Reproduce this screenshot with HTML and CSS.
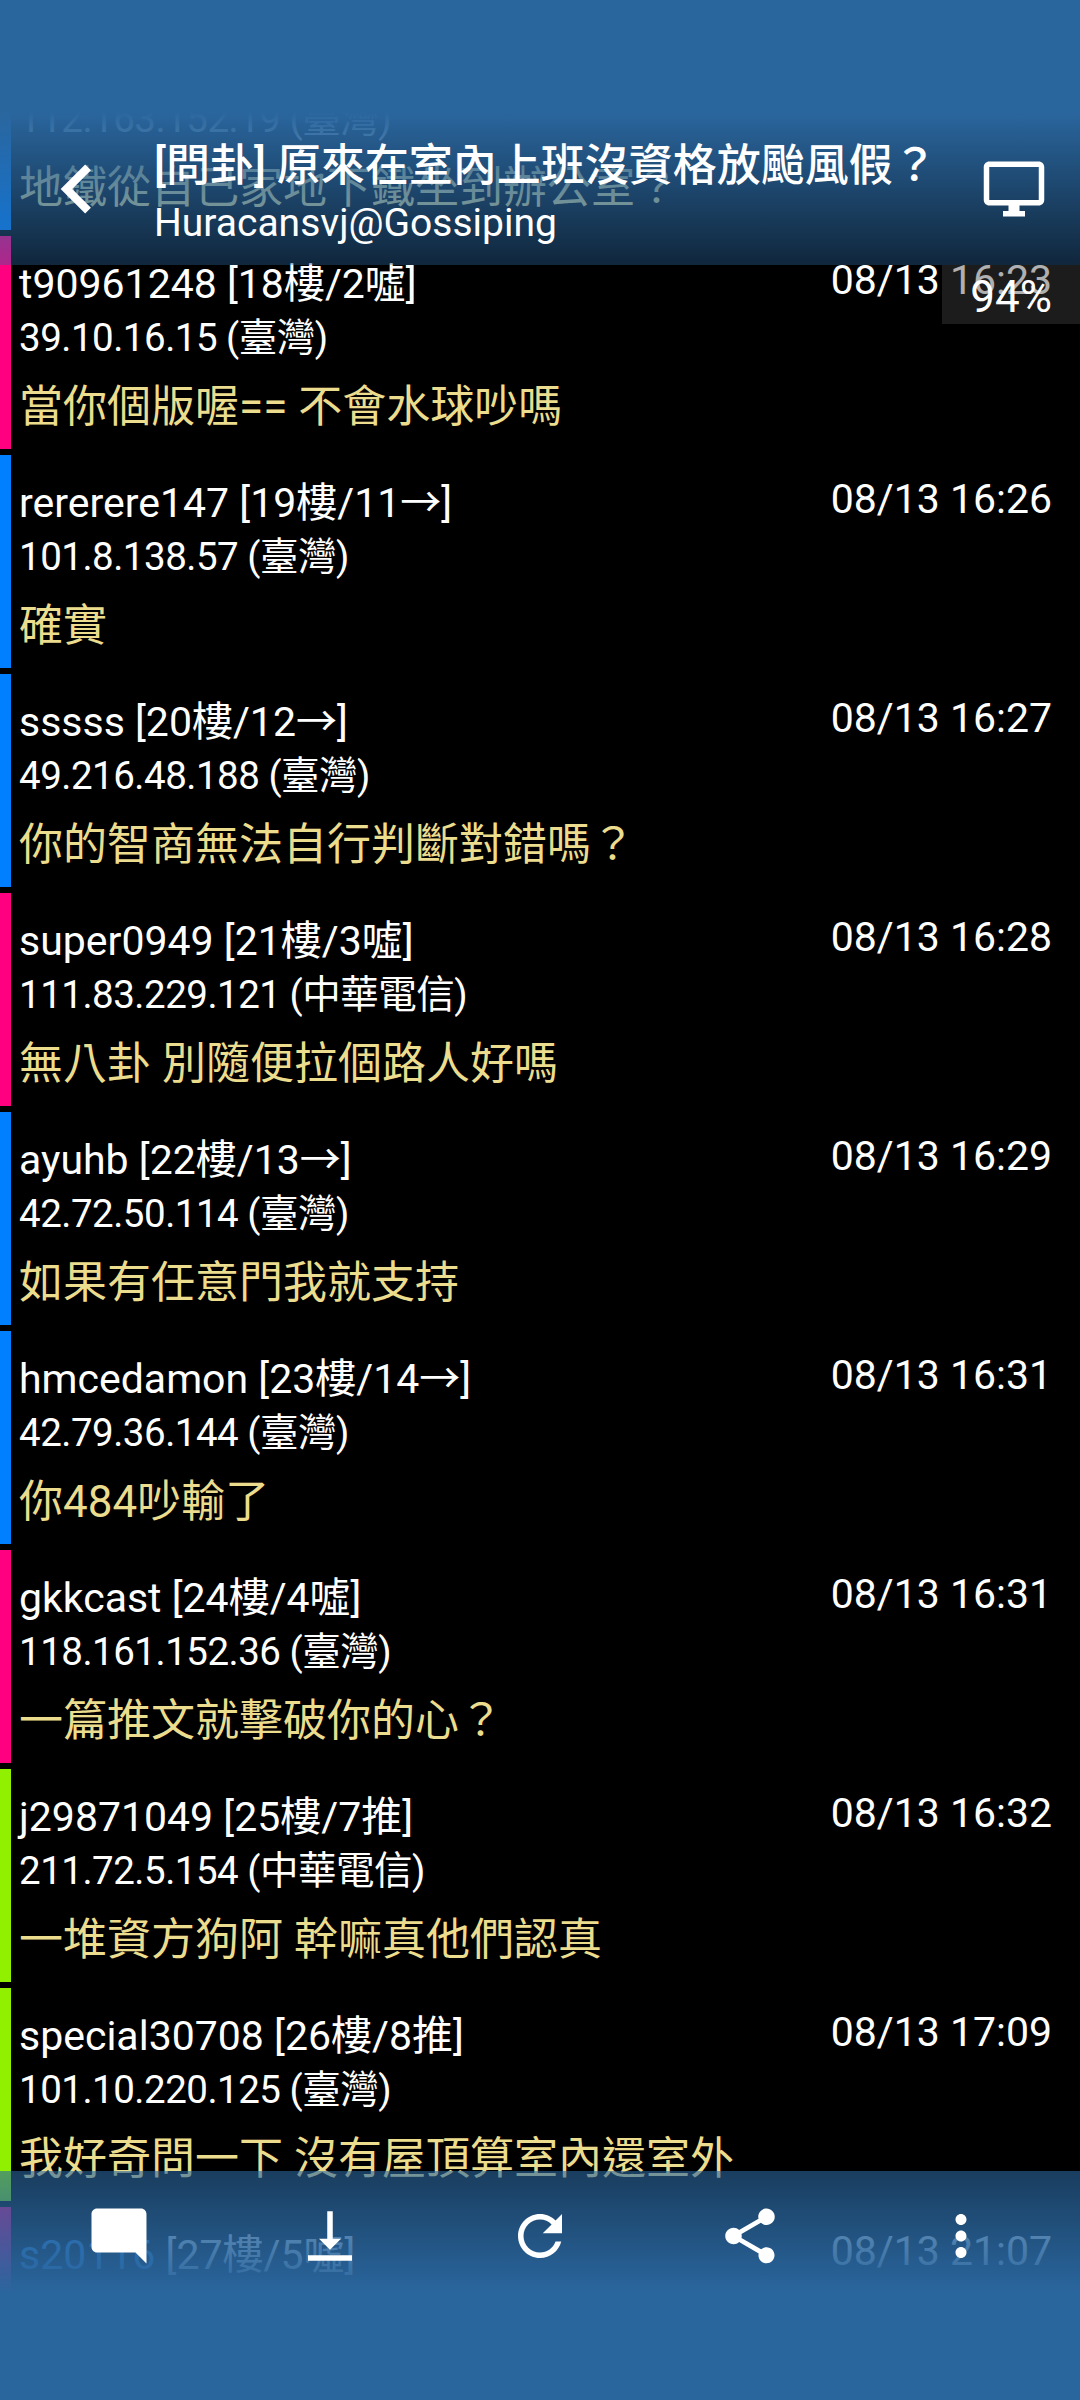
FILE: index.html
```
<!DOCTYPE html>
<html lang="zh-Hant">
<head>
<meta charset="utf-8">
<meta name="viewport" content="width=device-width, initial-scale=1.0">
<title>[問卦] 原來在室內上班沒資格放颱風假？</title>
<link rel="stylesheet" href="styles.css">
</head>
<body>
<div class="screen">
  <div class="list">
    <div class="row arrow">
      <div class="info">
        <div class="name">&nbsp;</div>
        <div class="ip">112.163.152.19 (臺灣)</div>
        <div class="text">地鐵從自己家地下鐵坐到辦公室？</div>
      </div>
    </div>
    <div class="row boo">
      <div class="info">
        <div class="name">t90961248 [18樓/2噓]</div>
        <div class="ip">39.10.16.15 (臺灣)</div>
        <div class="text">當你個版喔== 不會水球吵嗎</div>
      </div>
      <div class="date">08/13 16:23</div>
    </div>
    <div class="row arrow">
      <div class="info">
        <div class="name">rererere147 [19樓/11→]</div>
        <div class="ip">101.8.138.57 (臺灣)</div>
        <div class="text">確實</div>
      </div>
      <div class="date">08/13 16:26</div>
    </div>
    <div class="row arrow">
      <div class="info">
        <div class="name">sssss [20樓/12→]</div>
        <div class="ip">49.216.48.188 (臺灣)</div>
        <div class="text">你的智商無法自行判斷對錯嗎？</div>
      </div>
      <div class="date">08/13 16:27</div>
    </div>
    <div class="row boo">
      <div class="info">
        <div class="name">super0949 [21樓/3噓]</div>
        <div class="ip">111.83.229.121 (中華電信)</div>
        <div class="text">無八卦 別隨便拉個路人好嗎</div>
      </div>
      <div class="date">08/13 16:28</div>
    </div>
    <div class="row arrow">
      <div class="info">
        <div class="name">ayuhb [22樓/13→]</div>
        <div class="ip">42.72.50.114 (臺灣)</div>
        <div class="text">如果有任意門我就支持</div>
      </div>
      <div class="date">08/13 16:29</div>
    </div>
    <div class="row arrow">
      <div class="info">
        <div class="name">hmcedamon [23樓/14→]</div>
        <div class="ip">42.79.36.144 (臺灣)</div>
        <div class="text">你484吵輸了</div>
      </div>
      <div class="date">08/13 16:31</div>
    </div>
    <div class="row boo">
      <div class="info">
        <div class="name">gkkcast [24樓/4噓]</div>
        <div class="ip">118.161.152.36 (臺灣)</div>
        <div class="text">一篇推文就擊破你的心？</div>
      </div>
      <div class="date">08/13 16:31</div>
    </div>
    <div class="row push">
      <div class="info">
        <div class="name">j29871049 [25樓/7推]</div>
        <div class="ip">211.72.5.154 (中華電信)</div>
        <div class="text">一堆資方狗阿 幹嘛真他們認真</div>
      </div>
      <div class="date">08/13 16:32</div>
    </div>
    <div class="row push">
      <div class="info">
        <div class="name">special30708 [26樓/8推]</div>
        <div class="ip">101.10.220.125 (臺灣)</div>
        <div class="text">我好奇問一下 沒有屋頂算室內還室外</div>
      </div>
      <div class="date">08/13 17:09</div>
    </div>
    <div class="row boo">
      <div class="info">
        <div class="name"><span class="author">s20116</span> [27樓/5噓]</div>
      </div>
      <div class="date">08/13 21:07</div>
    </div>
  </div>

  <div class="header">
    <svg class="back" viewBox="0 0 24 24"><path d="M15.41 7.41L14 6l-6 6 6 6 1.41-1.41L10.83 12z"/></svg>
    <div class="titles">
      <div class="title">[問卦] 原來在室內上班沒資格放颱風假？</div>
      <div class="subtitle">Huracansvj@Gossiping</div>
    </div>
    <svg class="icon" viewBox="0 0 24 24"><path d="M21 2H3c-1.1 0-2 .9-2 2v12c0 1.1.9 2 2 2h7v2H8v2h8v-2h-2v-2h7c1.1 0 2-.9 2-2V4c0-1.1-.9-2-2-2zm0 14H3V4h18v12z"/></svg>
  </div>

  <div class="percent">94%</div>

  <div class="toolbar">
    <div class="tool"><svg class="icon" viewBox="0 0 24 24"><path d="M21.99 4c0-1.1-.89-2-1.99-2H4c-1.1 0-2 .9-2 2v12c0 1.1.9 2 2 2h14l4 4-.01-18z"/></svg></div>
    <div class="tool"><svg class="icon" viewBox="0 0 24 24"><path d="M16 13h-3V3h-2v10H8l4 4 4-4zM4 19v2h16v-2H4z"/></svg></div>
    <div class="tool"><svg class="icon" viewBox="0 0 24 24"><path d="M17.65 6.35C16.2 4.9 14.21 4 12 4c-4.42 0-7.99 3.58-7.99 8s3.57 8 7.99 8c3.73 0 6.84-2.55 7.73-6h-2.08c-.82 2.33-3.04 4-5.65 4-3.31 0-6-2.69-6-6s2.69-6 6-6c1.66 0 3.14.69 4.22 1.78L13 11h7V4l-2.35 2.35z"/></svg></div>
    <div class="tool"><svg class="icon" viewBox="0 0 24 24"><path d="M18 16.08c-.76 0-1.44.3-1.96.77L8.91 12.7c.05-.23.09-.46.09-.7s-.04-.47-.09-.7l7.05-4.11c.54.5 1.25.81 2.04.81 1.66 0 3-1.34 3-3s-1.34-3-3-3-3 1.34-3 3c0 .24.04.47.09.7L8.04 9.81C7.5 9.31 6.79 9 6 9c-1.66 0-3 1.34-3 3s1.34 3 3 3c.79 0 1.5-.31 2.04-.81l7.12 4.16c-.05.21-.08.43-.08.65 0 1.61 1.31 2.92 2.92 2.92s2.92-1.31 2.92-2.92-1.31-2.92-2.92-2.92z"/></svg></div>
    <div class="tool"><svg class="icon" viewBox="0 0 24 24"><path d="M12 8c1.1 0 2-.9 2-2s-.9-2-2-2-2 .9-2 2 .9 2 2 2zm0 2c-1.1 0-2 .9-2 2s.9 2 2 2 2-.9 2-2-.9-2-2-2zm0 6c-1.1 0-2 .9-2 2s.9 2 2 2 2-.9 2-2-.9-2-2-2z"/></svg></div>
  </div>
</div>
</body>
</html>
```
FILE: styles.css
```
html,body{
  margin: 0;
  background: #000;
}
.screen{
  position: relative;
  width: 1080px;
  height: 2400px;
  overflow: hidden;
  box-sizing: border-box;
  padding-top: 17px;
  background: #000;
  color: #fff;
  font-family: Roboto, "Noto Sans CJK TC", sans-serif;
  white-space: nowrap;
}

/* comments */
.list{
  display: flex;
  flex-direction: column;
  gap: 6px;
}
.row{
  display: flex;
  justify-content: space-between;
  flex-shrink: 0;
  box-sizing: border-box;
  height: 213px;
  padding: 20px 28px 0 8px;
  border-left: 11px solid #0080ff;
}
.arrow{
  border-color: #0080ff;
}
.boo{
  border-color: #ff0080;
}
.push{
  border-color: #90f000;
}
.name{
  margin-top: 4px;
  font-size: 41px;
  line-height: 48px;
}
.author{
  color: #3090f0;
}
.ip{
  margin-top: 5px;
  font-size: 38.5px;
  line-height: 50px;
  letter-spacing: -0.5px;
}
.text{
  margin-top: 18px;
  font-size: 44px;
  line-height: 52px;
  color: #ebdc8e;
}
.date{
  font-size: 41px;
  line-height: 48px;
}

/* bars over the list */
.header{
  position: absolute;
  top: 0;
  left: 0;
  display: flex;
  align-items: center;
  box-sizing: border-box;
  width: 100%;
  height: 265px;
  padding: 113px 33px 0 28px;
  background: linear-gradient(#2a669e 112px, rgba(42,102,158,0.38));
}
.back{
  width: 98px;
  height: 98px;
  fill: #fff;
}
.icon{
  width: 66px;
  height: 66px;
  fill: #fff;
}
.titles{
  flex: 1;
  padding: 8px 0 0 28px;
}
.title{
  font-size: 44px;
  font-weight: 500;
  line-height: 60px;
}
.subtitle{
  font-size: 39px;
  line-height: 54px;
}
.percent{
  position: absolute;
  top: 265px;
  right: 0;
  box-sizing: border-box;
  width: 138px;
  height: 59px;
  padding-right: 28px;
  background: rgba(66,66,66,0.42);
  text-align: right;
  font-size: 44px;
  line-height: 64px;
}
.toolbar{
  position: absolute;
  left: 0;
  bottom: 0;
  display: flex;
  box-sizing: border-box;
  width: 100%;
  height: 229px;
  padding: 31.5px 14px 0;
  background: linear-gradient(rgba(42,102,158,0.6), #2a669e 122px);
}
.tool{
  flex: 1;
  text-align: center;
}
```
